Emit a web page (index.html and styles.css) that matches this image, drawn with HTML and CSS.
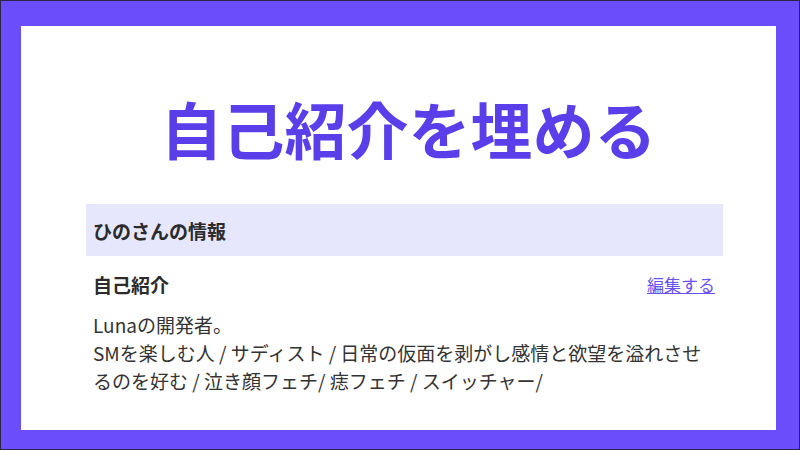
FILE: index.html
```html
<!DOCTYPE html>
<html lang="ja">
<head>
<meta charset="utf-8">
<link rel="stylesheet" href="styles.css">
</head>
<body>
<div class="frame">
  <div class="sheet">
    <h1 class="title">自己紹介を埋める</h1>
    <div class="content">
      <div class="bar">ひのさんの情報</div>
      <div class="row">
        <span class="label">自己紹介</span>
        <a class="edit" href="#">編集する</a>
      </div>
      <p class="bio">Lunaの開発者。<br>SMを楽しむ人 / サディスト / 日常の仮面を剥がし感情と欲望を溢れさせるのを好む / 泣き顔フェチ/ 痣フェチ / スイッチャー/</p>
    </div>
  </div>
</div>
</body>
</html>
```
FILE: styles.css
```css
* { box-sizing: border-box; }
html, body { margin: 0; padding: 0; }
body {
  width: 800px;
  height: 450px;
  font-family: "Noto Sans CJK JP", "Noto Sans", sans-serif;
  color: #333333;
}
.frame {
  width: 800px;
  height: 450px;
  background: #6c4dfc;
  border: 1px solid #2b2646;
  padding: 25px 23px 19px 20px;
}
.sheet {
  background: #ffffff;
  height: 100%;
  padding: 71px 53px 0 65px;
  display: flex;
  flex-direction: column;
}
.title {
  margin: 0;
  font-size: 62px;
  line-height: 62px;
  font-weight: 700;
  color: #5a3ee9;
  text-align: center;
  padding-left: 8px;
}
.content {
  margin-top: 45px;
  display: flex;
  flex-direction: column;
}
.bar {
  background: #e6e6fd;
  height: 52px;
  display: flex;
  align-items: center;
  padding: 0 7px;
  font-size: 19px;
  font-weight: 700;
  color: #2b2b2b;
}
.row {
  margin-top: 14px;
  height: 28px;
  display: flex;
  align-items: center;
  justify-content: space-between;
  padding: 0 8px 0 7px;
}
.label {
  font-size: 19px;
  font-weight: 700;
  color: #2b2b2b;
}
.edit {
  font-size: 17px;
  color: #6a52f2;
  text-decoration: underline;
}
.bio {
  margin: 13px 0 0;
  padding: 0 8px 0 7px;
  font-size: 19px;
  line-height: 28px;
  color: #333333;
}
```
